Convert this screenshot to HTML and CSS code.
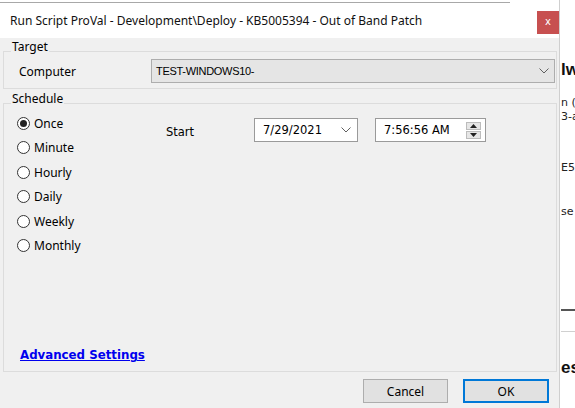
FILE: index.html
```html
<!DOCTYPE html>
<html>
<head>
<meta charset="utf-8">
<link rel="stylesheet" href="styles.css">
</head>
<body>
<div class="screen">
  <div class="dialog">
    <div class="titlebar">
      <div class="topline"></div>
      <div class="title-row">
        <span class="title">Run Script ProVal - Development\Deploy - KB5005394 - Out of Band Patch</span>
        <div class="close">x</div>
      </div>
    </div>
    <div class="content">
      <div class="group target">
        <span class="group-label">Target</span>
        <div class="row">
          <span class="lbl">Computer</span>
          <div class="combo">
            <span class="combo-text">TEST-WINDOWS10-</span>
            <svg class="chev" width="10" height="6" viewBox="0 0 10 6"><polyline points="0.5,0.5 5,5 9.5,0.5" fill="none" stroke="#606060" stroke-width="1"/></svg>
          </div>
        </div>
      </div>
      <div class="group schedule">
        <span class="group-label">Schedule</span>
        <div class="sched-body">
          <div class="radios">
            <div class="radio-row"><span class="radio checked"></span><span>Once</span></div>
            <div class="radio-row"><span class="radio"></span><span>Minute</span></div>
            <div class="radio-row"><span class="radio"></span><span>Hourly</span></div>
            <div class="radio-row"><span class="radio"></span><span>Daily</span></div>
            <div class="radio-row"><span class="radio"></span><span>Weekly</span></div>
            <div class="radio-row"><span class="radio"></span><span>Monthly</span></div>
          </div>
          <div class="start-row">
            <span class="start-lbl">Start</span>
            <div class="datebox">
              <span>7/29/2021</span>
              <svg class="chev" width="10" height="6" viewBox="0 0 10 6"><polyline points="0.5,0.5 5,5 9.5,0.5" fill="none" stroke="#606060" stroke-width="1"/></svg>
            </div>
            <div class="timebox">
              <span>7:56:56 AM</span>
              <div class="spin">
                <div class="spin-btn"><svg width="7" height="4" viewBox="0 0 7 4"><polygon points="3.5,0 7,4 0,4" fill="#222"/></svg></div>
                <div class="spin-btn"><svg width="7" height="4" viewBox="0 0 7 4"><polygon points="0,0 7,0 3.5,4" fill="#222"/></svg></div>
              </div>
            </div>
          </div>
        </div>
        <a class="adv" href="#">Advanced Settings</a>
      </div>
      <div class="buttons">
        <div class="btn">Cancel</div>
        <div class="btn ok">OK</div>
      </div>
    </div>
  </div>
  <div class="behind">
    <div class="b-big first">lw</div>
    <div class="b-small gap16">n (</div>
    <div class="b-small">3-a</div>
    <div class="b-small gap37">E5</div>
    <div class="b-small gap30">se</div>
    <div class="b-line dark"></div>
    <div class="b-line light"></div>
    <div class="b-big gap26">es</div>
  </div>
</div>
</body>
</html>
```
FILE: styles.css
```css
* { box-sizing: border-box; }
html, body { margin: 0; padding: 0; }
body { width: 575px; height: 408px; overflow: hidden; background: #ffffff; font-family: "Noto Sans", "DejaVu Sans", sans-serif; font-size: 12px; color: #000; }

.screen { display: flex; width: 575px; height: 408px; overflow: hidden; }

.dialog { width: 559px; height: 408px; background: #f0f0f0; display: flex; flex-direction: column; flex-shrink: 0; }

.titlebar { height: 38px; background: #ffffff; display: flex; flex-direction: column; }
.topline { margin-top: 2px; width: 510px; height: 1px; background: #a8a8a8; }
.title-row { display: flex; justify-content: space-between; align-items: flex-start; }
.title { margin-top: 9px; margin-left: 10px; font-size: 12px; line-height: 18px; color: #111; white-space: nowrap; }
.close { margin-top: 8px; width: 22px; height: 23px; background: #c75050; color: #fff; font-family: "DejaVu Sans", sans-serif; font-size: 10px; line-height: 22px; text-align: center; }

.content { padding: 13px 2px 0 3px; display: flex; flex-direction: column; }

.group { position: relative; border: 1px solid #dcdcdc; }
.group-label { position: absolute; top: -13px; left: 7px; padding: 0 1px; background: #f0f0f0; line-height: 16px; font-size: 12px; }

.target { padding: 7px 1px 5px 15px; }
.row { display: flex; align-items: center; }
.lbl { width: 132px; flex-shrink: 0; }
.combo { flex: 1; height: 24px; background: #e5e5e5; border: 1px solid #adadad; display: flex; align-items: center; justify-content: space-between; padding: 0 5px 0 4px; }
.combo-text { font-family: "Liberation Sans", sans-serif; font-size: 11px; letter-spacing: -0.3px; color: #000; }

.schedule { margin-top: 14px; height: 269px; display: flex; flex-direction: column; }
.sched-body { display: flex; padding: 7px 0 0 13px; }
.radios { width: 149px; display: flex; flex-direction: column; }
.radio-row { height: 24.5px; display: flex; align-items: center; }
.radio { width: 13px; height: 13px; border-radius: 50%; border: 1.5px solid #333; background: #fff; margin-right: 4px; display: flex; align-items: center; justify-content: center; }
.radio.checked::after { content: ""; width: 7px; height: 7px; border-radius: 50%; background: #222; }

.start-row { display: flex; align-items: center; margin-top: 7px; height: 24px; font-family: "DejaVu Sans", sans-serif; font-size: 11.5px; }
.start-lbl { width: 88px; padding-top: 3px; }
.datebox { width: 104px; height: 24px; border: 1px solid #9a9a9a; background: #fff; display: flex; align-items: center; justify-content: space-between; padding: 0 6px 0 8px; }
.timebox { margin-left: 17px; width: 111px; height: 24px; border: 1px solid #9a9a9a; background: #fff; display: flex; align-items: center; justify-content: space-between; padding: 0 4px 0 8px; }
.spin { display: flex; flex-direction: column; width: 15px; height: 17px; gap: 1px; }
.spin-btn { flex: 1; background: #e6e6e6; border: 1px solid #bcbcbc; display: flex; align-items: center; justify-content: center; }

.adv { margin-top: auto; margin-left: 16px; margin-bottom: 8px; align-self: flex-start; font-family: "DejaVu Sans", sans-serif; font-weight: bold; font-size: 11.8px; line-height: 16px; color: #0000ee; text-decoration: underline; }

.buttons { display: flex; justify-content: flex-end; gap: 15px; margin-top: 7px; padding-right: 8px; }
.btn { width: 85px; height: 24px; background: #e1e1e1; border: 1px solid #adadad; display: flex; align-items: center; justify-content: center; font-size: 12px; }
.btn.ok { width: 86px; border: 2px solid #0078d7; }

.behind { flex: 1; background: #ffffff; border-left: 1px solid #cfcfcf; padding-left: 1px; overflow: hidden; white-space: nowrap; font-family: "Liberation Sans", sans-serif; }
.b-big { font-size: 17px; font-weight: bold; line-height: 20px; color: #111; }
.b-small { font-size: 11px; line-height: 14px; color: #222; font-family: "DejaVu Sans", sans-serif; }
.first { margin-top: 60px; }
.gap16 { margin-top: 16px; }
.gap37 { margin-top: 37px; }
.gap30 { margin-top: 30px; }
.gap26 { margin-top: 26px; }
.b-line { width: 100%; }
.b-line.dark { margin-top: 90px; height: 2px; background: #555; }
.b-line.light { margin-top: 20px; height: 1px; background: #d0d0d0; }
```
